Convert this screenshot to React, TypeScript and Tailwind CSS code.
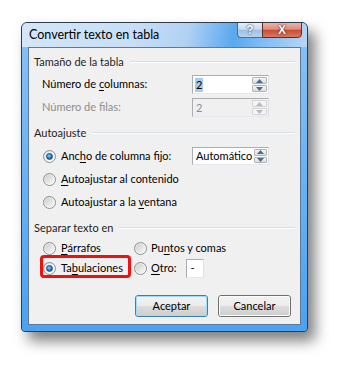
import React from "react";

const font = { fontFamily: 'Lato, "Noto Sans", sans-serif' };

function Tri({ up, disabled }: { up: boolean; disabled?: boolean }) {
  return (
    <svg width="7" height="4" viewBox="0 0 7 4">
      {up ? (
        <polygon points="0,4 7,4 3.5,0" fill={disabled ? "#b8b8b8" : "#4a6a9a"} />
      ) : (
        <polygon points="0,0 7,0 3.5,4" fill={disabled ? "#b8b8b8" : "#4a6a9a"} />
      )}
    </svg>
  );
}

function Spin({
  value,
  disabled,
  selected,
  h = "h-[19px]",
}: {
  value: string;
  disabled?: boolean;
  selected?: boolean;
  h?: string;
}) {
  return (
    <div
      className={`w-[77px] ${h} border border-[#abadb3] border-r-[#dbdfe6] border-b-[#e3e9ef] flex ${
        disabled ? "bg-[#f0f0f0]" : "bg-white"
      }`}
    >
      <div className="flex-1 flex items-center pl-[2px]">
        <span
          className={`leading-[14px] px-[1px] ${
            selected ? "bg-[#a5cdf3] text-black" : disabled ? "text-[#8d8d8d]" : "text-black"
          }`}
        >
          {value}
        </span>
      </div>
      <div className="w-[17px] flex flex-col gap-[1px] p-[1px]">
        <div
          className={`flex-1 flex items-center justify-center border rounded-[1px] ${
            disabled
              ? "border-[#d5d5d5] bg-[#f4f4f4]"
              : "border-[#b5b5b5] bg-gradient-to-b from-[#f6f6f6] to-[#dcdcdc]"
          }`}
        >
          <Tri up disabled={disabled} />
        </div>
        <div
          className={`flex-1 flex items-center justify-center border rounded-[1px] ${
            disabled
              ? "border-[#d5d5d5] bg-[#f4f4f4]"
              : "border-[#b5b5b5] bg-gradient-to-b from-[#f6f6f6] to-[#dcdcdc]"
          }`}
        >
          <Tri up={false} disabled={disabled} />
        </div>
      </div>
    </div>
  );
}

function Radio({ checked }: { checked?: boolean }) {
  return (
    <div className="w-[13px] h-[13px] rounded-full border border-[#8e8f8f] bg-gradient-to-br from-[#d8d8d8] via-[#f4f4f4] to-[#ffffff] flex items-center justify-center shrink-0">
      {checked ? (
        <div className="w-[7px] h-[7px] rounded-full bg-[radial-gradient(circle_at_40%_35%,#8fd3ff_0%,#2a8ad4_45%,#0b3f7a_100%)] border border-[#1b4f86]" />
      ) : (
        <div className="w-[9px] h-[9px] rounded-full bg-gradient-to-br from-[#cfcfcf] to-[#f7f7f7]" />
      )}
    </div>
  );
}

function Header({ children }: { children: React.ReactNode }) {
  return (
    <div className="h-[14px] flex items-center gap-[6px] pl-[5px] pr-[5px]">
      <span className="leading-[14px] whitespace-nowrap text-[#1e1e1e]">{children}</span>
      <div className="flex-1 h-[2px] border-t border-[#d5dfe5] border-b border-b-white" />
    </div>
  );
}

function U({ children }: { children: React.ReactNode }) {
  return <span className="underline underline-offset-[2px] decoration-[1px]">{children}</span>;
}

function Button({ children, def }: { children: React.ReactNode; def?: boolean }) {
  return (
    <div
      className={`w-[73px] h-[22px] rounded-[3px] border ${
        def ? "border-[#3c7fb1]" : "border-[#707070]"
      }`}
    >
      <div
        className={`w-full h-full rounded-[2px] flex items-center justify-center text-black border bg-[linear-gradient(to_bottom,#f2f2f2_0%,#ebebeb_50%,#dddddd_50%,#cfcfcf_100%)] ${
          def ? "border-[#9fdcf7]" : "border-[#fbfbfb]"
        }`}
      >
        {children}
      </div>
    </div>
  );
}

export default function App() {
  return (
    <div className="w-[351px] h-[375px] bg-white overflow-hidden text-[11px]" style={font}>
      <div className="pt-[22px] pl-[21px]">
        <div className="w-[287px] h-[310px] rounded-t-[6px] rounded-b-[4px] border border-[#2e3c4c] shadow-[7px_9px_14px_rgba(0,0,0,0.5)] bg-[#4aa2f2] flex flex-col overflow-hidden">
          {/* title bar */}
          <div className="h-[24px] relative flex items-start pt-[4px] pl-[7px] bg-[linear-gradient(100deg,#d4e6f8_0%,#c7def6_40%,#b1d1f3_58%,#5aa8ef_74%,#7dbcf3_84%,#b8d6f3_100%)]">
            <span className="text-[12.5px] text-black leading-[16px]">Convertir texto en tabla</span>
            <div className="absolute right-[5px] top-[-1px] flex">
              <div className="w-[25px] h-[16px] rounded-bl-[4px] border border-[#4f6d8d] border-r-0 bg-[linear-gradient(to_bottom,#e4eef9_0%,#c7dbf1_45%,#9ebfe4_50%,#b9d3ee_100%)] flex items-center justify-center">
                <span
                  className="text-[12px] font-bold text-white leading-[12px] [text-shadow:0_0_2px_#2c4a6c,0_0_1px_#2c4a6c]"
                  style={{ fontFamily: '"Liberation Sans", sans-serif' }}
                >
                  ?
                </span>
              </div>
              <div className="w-[40px] h-[16px] rounded-br-[4px] border border-[#6a2a22] bg-[linear-gradient(to_bottom,#eab3a7_0%,#dd8d7d_45%,#c84a34_50%,#d87a5e_100%)] flex items-center justify-center">
                <span
                  className="text-[12px] font-bold text-white leading-[12px] [text-shadow:0_0_2px_#5a1a12,0_0_1px_#5a1a12]"
                  style={{ fontFamily: '"Liberation Sans", sans-serif' }}
                >
                  X
                </span>
              </div>
            </div>
          </div>
          {/* frame + content */}
          <div className="flex-1 px-[6px] pb-[6px] bg-[linear-gradient(to_bottom,#86bff4_0%,#4aa2f2_100%)]">
            <div className="w-full h-full border border-[#5c7a99] bg-[#f0f0f0] flex flex-col text-black">
              <div className="mt-[7px]">
                <Header>Tamaño de la tabla</Header>
              </div>
              <div className="mt-[6px] h-[19px] flex items-center">
                <span className="pl-[13px] w-[163px]">
                  Número de <U>c</U>olumnas:
                </span>
                <Spin value="2" selected />
              </div>
              <div className="mt-[4px] h-[19px] flex items-center">
                <span className="pl-[13px] w-[163px] text-[#8d8d8d]">Número de filas:</span>
                <Spin value="2" disabled />
              </div>
              <div className="mt-[9px]">
                <Header>Autoajuste</Header>
              </div>
              <div className="mt-[7px] h-[18px] flex items-center">
                <div className="pl-[14px] w-[163px] flex items-center gap-[5px]">
                  <Radio checked />
                  <span>
                    Anc<U>h</U>o de columna fijo:
                  </span>
                </div>
                <Spin value="Automático" h="h-[18px]" />
              </div>
              <div className="mt-[5px] h-[18px] flex items-center pl-[14px] gap-[5px]">
                <Radio />
                <span>
                  <U>A</U>utoajustar al contenido
                </span>
              </div>
              <div className="mt-[5px] h-[18px] flex items-center pl-[14px] gap-[5px]">
                <Radio />
                <span>
                  Autoajustar a la <U>v</U>entana
                </span>
              </div>
              <div className="mt-[10px]">
                <Header>Separar texto en</Header>
              </div>
              <div className="mt-[4px] h-[18px] flex items-center">
                <div className="pl-[14px] w-[105px] flex items-center gap-[5px]">
                  <Radio />
                  <span>
                    <U>P</U>árrafos
                  </span>
                </div>
                <div className="flex items-center gap-[4px]">
                  <Radio />
                  <span>
                    Pu<U>n</U>tos y comas
                  </span>
                </div>
              </div>
              <div className="mt-[2px] h-[19px] flex items-center relative">
                <div className="pl-[14px] w-[105px] flex items-center gap-[5px]">
                  <Radio checked />
                  <span>
                    Ta<U>b</U>ulaciones
                  </span>
                </div>
                <div className="flex items-center gap-[4px]">
                  <Radio />
                  <span>
                    <U>O</U>tro:
                  </span>
                </div>
                <div className="ml-[9px] w-[18px] h-[19px] border border-[#abadb3] border-r-[#dbdfe6] border-b-[#e3e9ef] bg-white flex items-center pl-[4px]">
                  -
                </div>
                <div className="absolute left-[11px] top-[-4px] w-[91px] h-[23px] border-[3px] border-[#ee1111] rounded-[4px]" />
              </div>
              <div className="mt-[17px] flex gap-[10px] pl-[106px]">
                <Button def>Aceptar</Button>
                <Button>Cancelar</Button>
              </div>
            </div>
          </div>
        </div>
      </div>
    </div>
  );
}
